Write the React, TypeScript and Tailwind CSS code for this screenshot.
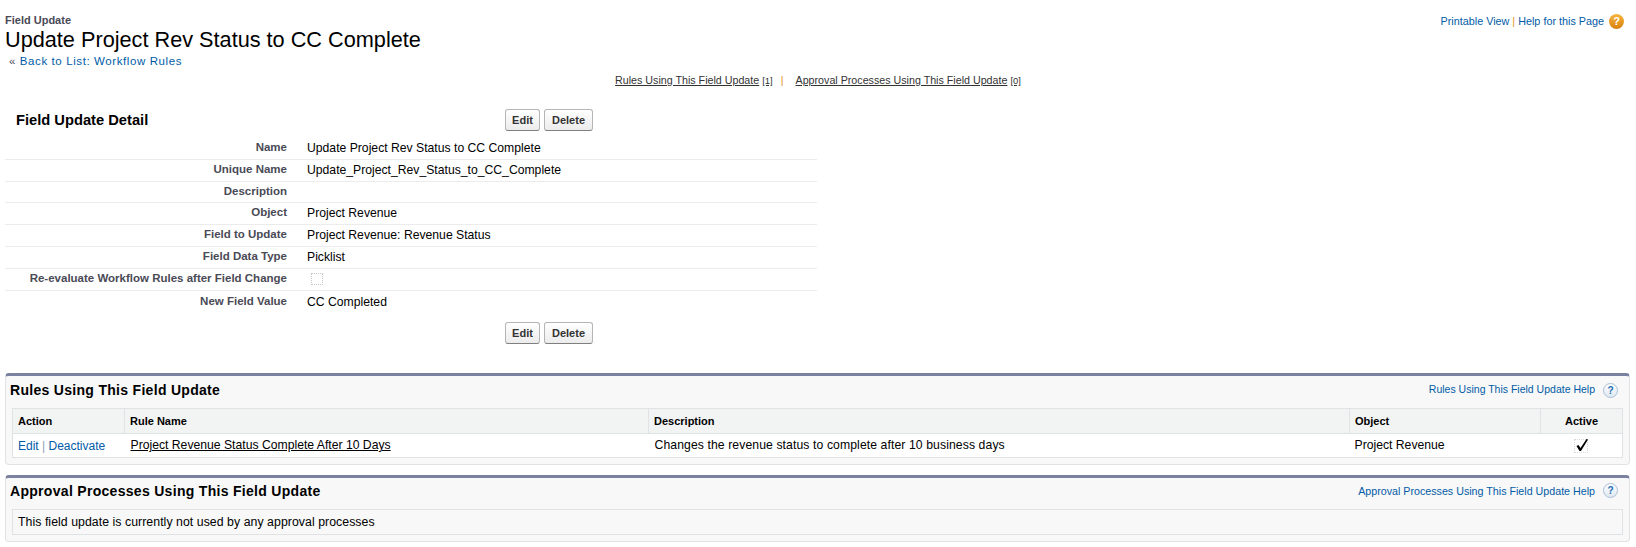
import React from "react";

const rows: [string, string][] = [
  ["Name", "Update Project Rev Status to CC Complete"],
  ["Unique Name", "Update_Project_Rev_Status_to_CC_Complete"],
  ["Description", ""],
  ["Object", "Project Revenue"],
  ["Field to Update", "Project Revenue: Revenue Status"],
  ["Field Data Type", "Picklist"],
  ["Re-evaluate Workflow Rules after Field Change", "__check"],
  ["New Field Value", "CC Completed"],
];

function Buttons() {
  return (
    <div className="flex gap-[4px]">
      <button className="h-[22px] w-[35px] rounded-[3px] border border-[#b5b5b5] border-b-[#7f7f7f] bg-gradient-to-b from-white to-[#ececec] text-[11px] font-bold text-[#333]">Edit</button>
      <button className="h-[22px] w-[49px] rounded-[3px] border border-[#b5b5b5] border-b-[#7f7f7f] bg-gradient-to-b from-white to-[#ececec] text-[11px] font-bold text-[#333]">Delete</button>
    </div>
  );
}

function Help({ label, size }: { label: string; size: string }) {
  return (
    <div className="flex items-center gap-[8px]">
      <span className={size + " text-[#015ba7]"}>{label}</span>
      <span className="flex h-[15px] w-[15px] items-center justify-center rounded-full border border-[#a9bfd6] bg-gradient-to-b from-white to-[#dfe8f2] text-[10px] font-bold text-[#1b6fb5]">?</span>
    </div>
  );
}

export default function App() {
  return (
    <div className="h-[547px] w-[1636px] overflow-hidden bg-white font-['Liberation_Sans',Arial,sans-serif] text-[12px] text-black">
      <div className="flex items-start justify-between pr-[12px] pt-[14px]">
        <div className="pl-[5px]">
          <div className="text-[11px] font-bold leading-[13px] text-[#4a4a56]">Field Update</div>
          <h1 className="text-[21.7px] leading-[26px] text-black">Update Project Rev Status to CC Complete</h1>
          <div className="mt-[1px] pl-[4px] text-[11.5px] leading-[14px] tracking-[0.6px] text-[#015ba7]"><span className="text-[#4a4a56]">«</span> Back to List: Workflow Rules</div>
        </div>
        <div className="-mt-[1px] flex items-center gap-[5px] text-[10.8px] text-[#015ba7]">
          <span>Printable View <span className="text-[#e39321]">|</span> Help for this Page</span>
          <span className="flex h-[15px] w-[15px] items-center justify-center rounded-full bg-gradient-to-b from-[#f6b73c] to-[#d87f0a] text-[11px] font-bold text-white">?</span>
        </div>
      </div>

      <div className="mt-[6px] flex justify-center text-[10.7px] leading-[13px] text-[#333]">
        <span><span className="underline">Rules Using This Field Update</span> <span className="text-[9.5px] underline">[1]</span></span>
        <span className="ml-[8px] mr-[12px] text-[#e39321]">|</span>
        <span><span className="underline">Approval Processes Using This Field Update</span> <span className="text-[9.5px] underline">[0]</span></span>
      </div>

      <div className="mt-[20px] w-[817px] pl-[5px]">
        <div className="flex h-[26px] items-center">
          <h2 className="w-[500px] pl-[11px] text-[14.7px] font-bold text-black">Field Update Detail</h2>
          <Buttons />
        </div>
        <table className="mt-[4px] w-full border-collapse">
          <tbody>
            {rows.map(([k, v], i) => (
              <tr key={k} className={i === rows.length - 1 ? "h-[23px]" : i === 2 ? "h-[21px] border-b border-[#ececec]" : "h-[22px] border-b border-[#ececec]"}>
                <td className="w-[282px] text-right align-middle text-[11.5px] font-bold text-[#4a4a56]">{k}</td>
                <td className="pl-[20px] align-middle text-[12.2px] text-black">
                  {v === "__check" ? <span className="ml-[4px] block h-[12px] w-[12px] border border-dotted border-[#c8c8c8]" /> : v}
                </td>
              </tr>
            ))}
          </tbody>
        </table>
        <div className="mt-[9px] pl-[500px]"><Buttons /></div>
      </div>

      <section className="ml-[5px] mt-[29px] w-[1625px] rounded-[4px] border border-t-[3px] border-[#e0e3e5] border-t-[#7b829f] bg-[#f8f8f8] px-[6px] pb-[6px]">
        <div className="mb-[4px] flex h-[28px] items-center justify-between pr-[5px]">
          <h3 className="-ml-[2px] text-[14px] font-bold tracking-[0.3px] text-black">Rules Using This Field Update</h3>
          <Help label="Rules Using This Field Update Help" size="text-[10.5px]" />
        </div>
        <table className="w-full border-collapse border border-[#e0e3e5] bg-white text-[12.2px]">
          <thead>
            <tr className="h-[25px] border-b border-[#e0e3e5] bg-[#f2f3f3] text-[11px] font-bold">
              <th className="w-[112px] border-r border-[#e0e3e5] pl-[5px] text-left">Action</th>
              <th className="w-[524px] border-r border-[#e0e3e5] pl-[5px] text-left">Rule Name</th>
              <th className="w-[701px] border-r border-[#e0e3e5] pl-[5px] text-left">Description</th>
              <th className="w-[191px] border-r border-[#e0e3e5] pl-[5px] text-left">Object</th>
              <th className="text-center">Active</th>
            </tr>
          </thead>
          <tbody>
            <tr className="h-[24px]">
              <td className="pl-[5px] text-[12px] text-[#015ba7]">Edit <span className="text-[#8aa0b5]">|</span> Deactivate</td>
              <td className="pl-[6px] underline">Project Revenue Status Complete After 10 Days</td>
              <td className="pl-[6px] tracking-[0.1px]">Changes the revenue status to complete after 10 business days</td>
              <td className="pl-[5px]">Project Revenue</td>
              <td className="text-center">
                <span className="relative inline-block h-[12px] w-[12px] align-middle outline-1 outline-dotted outline-[#d8d8d8]">
                  <svg viewBox="0 0 14 14" className="absolute left-0 top-[-2px] h-[14px] w-[14px]"><path d="M1.5 8 L3.5 7 L5.5 10 L11.5 1 L13 1.5 L6 13 L4.5 13 Z" fill="#000" /></svg>
                </span>
              </td>
            </tr>
          </tbody>
        </table>
      </section>

      <section className="ml-[5px] mt-[10px] w-[1625px] rounded-[4px] border border-t-[3px] border-[#e0e3e5] border-t-[#7b829f] bg-[#f8f8f8] px-[6px] pb-[6px]">
        <div className="mb-[5px] flex h-[26px] items-center justify-between pr-[5px]">
          <h3 className="-ml-[2px] text-[14px] font-bold tracking-[0.3px] text-black">Approval Processes Using This Field Update</h3>
          <Help label="Approval Processes Using This Field Update Help" size="text-[10.7px]" />
        </div>
        <div className="flex h-[26px] items-center border border-[#e0e3e5] pl-[5px] text-[12.3px] tracking-[0.05px]">This field update is currently not used by any approval processes</div>
      </section>
    </div>
  );
}
